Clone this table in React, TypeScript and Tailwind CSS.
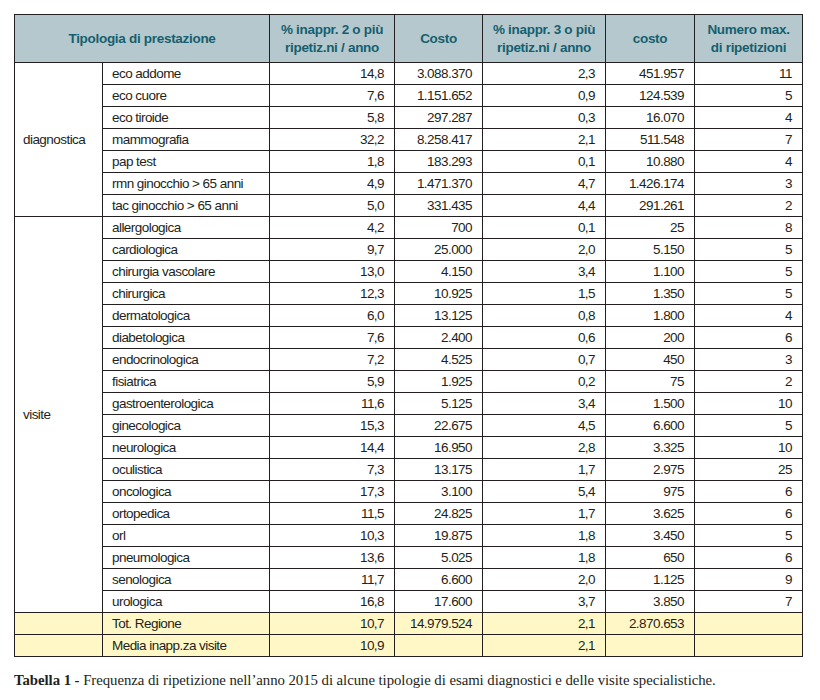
type Row = [string, string, string, string, string, string];

const diagnostica: Row[] = [
  ["eco addome", "14,8", "3.088.370", "2,3", "451.957", "11"],
  ["eco cuore", "7,6", "1.151.652", "0,9", "124.539", "5"],
  ["eco tiroide", "5,8", "297.287", "0,3", "16.070", "4"],
  ["mammografia", "32,2", "8.258.417", "2,1", "511.548", "7"],
  ["pap test", "1,8", "183.293", "0,1", "10.880", "4"],
  ["rmn ginocchio > 65 anni", "4,9", "1.471.370", "4,7", "1.426.174", "3"],
  ["tac ginocchio > 65 anni", "5,0", "331.435", "4,4", "291.261", "2"],
];

const visite: Row[] = [
  ["allergologica", "4,2", "700", "0,1", "25", "8"],
  ["cardiologica", "9,7", "25.000", "2,0", "5.150", "5"],
  ["chirurgia vascolare", "13,0", "4.150", "3,4", "1.100", "5"],
  ["chirurgica", "12,3", "10.925", "1,5", "1.350", "5"],
  ["dermatologica", "6,0", "13.125", "0,8", "1.800", "4"],
  ["diabetologica", "7,6", "2.400", "0,6", "200", "6"],
  ["endocrinologica", "7,2", "4.525", "0,7", "450", "3"],
  ["fisiatrica", "5,9", "1.925", "0,2", "75", "2"],
  ["gastroenterologica", "11,6", "5.125", "3,4", "1.500", "10"],
  ["ginecologica", "15,3", "22.675", "4,5", "6.600", "5"],
  ["neurologica", "14,4", "16.950", "2,8", "3.325", "10"],
  ["oculistica", "7,3", "13.175", "1,7", "2.975", "25"],
  ["oncologica", "17,3", "3.100", "5,4", "975", "6"],
  ["ortopedica", "11,5", "24.825", "1,7", "3.625", "6"],
  ["orl", "10,3", "19.875", "1,8", "3.450", "5"],
  ["pneumologica", "13,6", "5.025", "1,8", "650", "6"],
  ["senologica", "11,7", "6.600", "2,0", "1.125", "9"],
  ["urologica", "16,8", "17.600", "3,7", "3.850", "7"],
];

const totali: Row[] = [
  ["Tot. Regione", "10,7", "14.979.524", "2,1", "2.870.653", ""],
  ["Media inapp.za visite", "10,9", "", "2,1", "", ""],
];

const cell = "border border-[#231f20] h-[22px] p-0 leading-none whitespace-nowrap";
const num = cell + " text-right pr-[10px]";
const th = "border border-[#231f20] font-bold leading-[18px] p-0 whitespace-nowrap";

function DataCells({ r }: { r: Row }) {
  return (
    <>
      <td className={cell + " pl-[9px] text-left"}>{r[0]}</td>
      <td className={num}>{r[1]}</td>
      <td className={num}>{r[2]}</td>
      <td className={num}>{r[3]}</td>
      <td className={num}>{r[4]}</td>
      <td className={num}>{r[5]}</td>
    </>
  );
}

function Group({ label, rows }: { label: string; rows: Row[] }) {
  return (
    <>
      {rows.map((r, i) => (
        <tr key={r[0]}>
          {i === 0 && (
            <td rowSpan={rows.length} className={cell + " pl-[8px] text-left align-middle"}>
              {label}
            </td>
          )}
          <DataCells r={r} />
        </tr>
      ))}
    </>
  );
}

export default function App() {
  return (
    <div className="w-[820px] h-[700px] bg-white pt-[14px] pl-[14px] font-['Liberation_Sans',sans-serif]">
      <table className="border-collapse border border-[#231f20] table-fixed w-[788px] text-[13.5px] tracking-[-0.55px] text-[#231f20]">
        <colgroup>
          <col className="w-[88px]" />
          <col className="w-[167px]" />
          <col className="w-[125px]" />
          <col className="w-[88px]" />
          <col className="w-[123px]" />
          <col className="w-[89px]" />
          <col className="w-[108px]" />
        </colgroup>
        <thead>
          <tr className="bg-[#b4c8cd] text-[#165f6f] h-[48px] text-[13.5px] tracking-[-0.3px]">
            <th colSpan={2} className={th}>
              Tipologia di prestazione
            </th>
            <th className={th}>
              % inappr. 2 o più
              <br />
              ripetiz.ni / anno
            </th>
            <th className={th}>Costo</th>
            <th className={th}>
              % inappr. 3 o più
              <br />
              ripetiz.ni / anno
            </th>
            <th className={th}>costo</th>
            <th className={th}>
              Numero max.
              <br />
              di ripetizioni
            </th>
          </tr>
        </thead>
        <tbody>
          <Group label="diagnostica" rows={diagnostica} />
          <Group label="visite" rows={visite} />
          {totali.map((r) => (
            <tr key={r[0]} className="bg-[#fff8c6]">
              <td className={cell}></td>
              <DataCells r={r} />
            </tr>
          ))}
        </tbody>
      </table>
      <p className="mt-[12px] text-[14.8px] tracking-[-0.05px] text-[#231f20] font-['Liberation_Serif',serif]">
        <span className="font-bold">Tabella 1 - </span>
        Frequenza di ripetizione nell’anno 2015 di alcune tipologie di esami diagnostici e delle visite specialistiche.
      </p>
    </div>
  );
}
